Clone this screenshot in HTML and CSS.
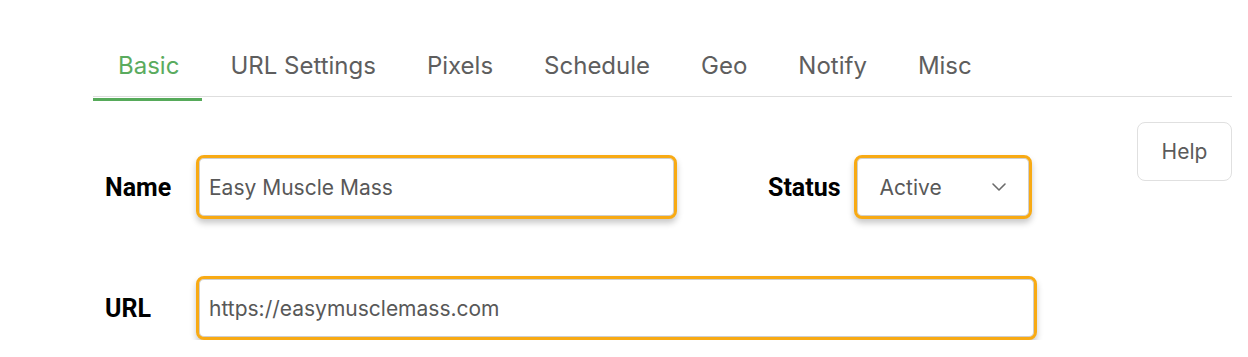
FILE: index.html
```html
<!DOCTYPE html>
<html lang="en">
<head>
  <meta charset="UTF-8" />
  <meta name="viewport" content="width=device-width, initial-scale=1.0" />
  <title>Link settings</title>
  <link rel="stylesheet" href="styles.css">
</head>
<body>
  <div class="wrap">
    <nav class="tabs">
      <a class="tab active" href="#">Basic</a>
      <a class="tab" href="#">URL Settings</a>
      <a class="tab" href="#">Pixels</a>
      <a class="tab" href="#">Schedule</a>
      <a class="tab" href="#">Geo</a>
      <a class="tab" href="#">Notify</a>
      <a class="tab" href="#">Misc</a>
    </nav>

    <div class="panel">
      <form class="form">
        <div class="row">
          <label class="label" for="name">Name</label>
          <input class="field name-field" id="name" type="text" value="Easy Muscle Mass" />
          <div class="status">
            <label class="label status-label">Status</label>
            <div class="field select">
              <span>Active</span>
              <svg width="16" height="10" viewBox="0 0 16 10">
                <path d="M2 2 L8 8 L14 2" fill="none" stroke="#6b6b6b" stroke-width="1.6" stroke-linecap="round" stroke-linejoin="round" />
              </svg>
            </div>
          </div>
        </div>
        <div class="row url-row">
          <label class="label" for="url">URL</label>
          <input class="field url-field" id="url" type="text" value="https://easymusclemass.com" />
        </div>
      </form>

      <button class="help" type="button">Help</button>
    </div>
  </div>
</body>
</html>
```

FILE: styles.css
```css
body {
  margin: 0;
  font-family: Inter, "Noto Sans", sans-serif;
  background-color: #fff;
  color: #5b5b5b;
}

.wrap {
  width: 1139px;
  margin-left: 93px;
  padding-top: 52px;
}

.tabs {
  display: flex;
  border-bottom: 1px solid #dedede;
}

.tab {
  position: relative;
  padding: 0 26px 16px 25px;
  font-size: 24px;
  line-height: 28px;
  color: #5e5e5e;
  text-decoration: none;
}

.tab.active {
  color: #5aab5e;
}

.tab.active::after {
  content: "";
  position: absolute;
  left: 0;
  right: 3px;
  bottom: -5px;
  height: 3px;
  background-color: #56aa5a;
}

.panel {
  display: flex;
  justify-content: space-between;
  align-items: flex-start;
}

.form {
  padding: 58px 0 0 12px;
}

.row {
  display: flex;
  align-items: center;
}

.url-row {
  margin-top: 57px;
}

.label {
  width: 91px;
  font-family: Roboto, Arial, sans-serif;
  font-weight: bold;
  font-size: 25px;
  color: #000;
}

.field {
  box-sizing: border-box;
  height: 64px;
  padding: 0 10px;
  border: 3px solid #f8aa14;
  border-radius: 8px;
  box-shadow: inset 0 0 0 1px #cfcfcf, 0 4px 6px rgba(0, 0, 0, 0.22);
  background-color: #fff;
  font-family: Inter, "Noto Sans", sans-serif;
  font-size: 21px;
  color: #585858;
  outline: none;
}

.name-field {
  width: 481px;
}

.url-field {
  width: 841px;
}

.status {
  display: flex;
  align-items: center;
  margin-left: 91px;
}

.status-label {
  width: auto;
  margin-right: 13px;
}

.select {
  width: 178px;
  display: flex;
  align-items: center;
  justify-content: space-between;
  padding: 0 22px 0 23px;
}

.help {
  margin-top: 25px;
  width: 95px;
  height: 59px;
  border: 1px solid #e0e0e0;
  border-radius: 8px;
  background-color: #fff;
  font-family: Inter, "Noto Sans", sans-serif;
  font-size: 21px;
  color: #5b5b5b;
  cursor: pointer;
}
```
